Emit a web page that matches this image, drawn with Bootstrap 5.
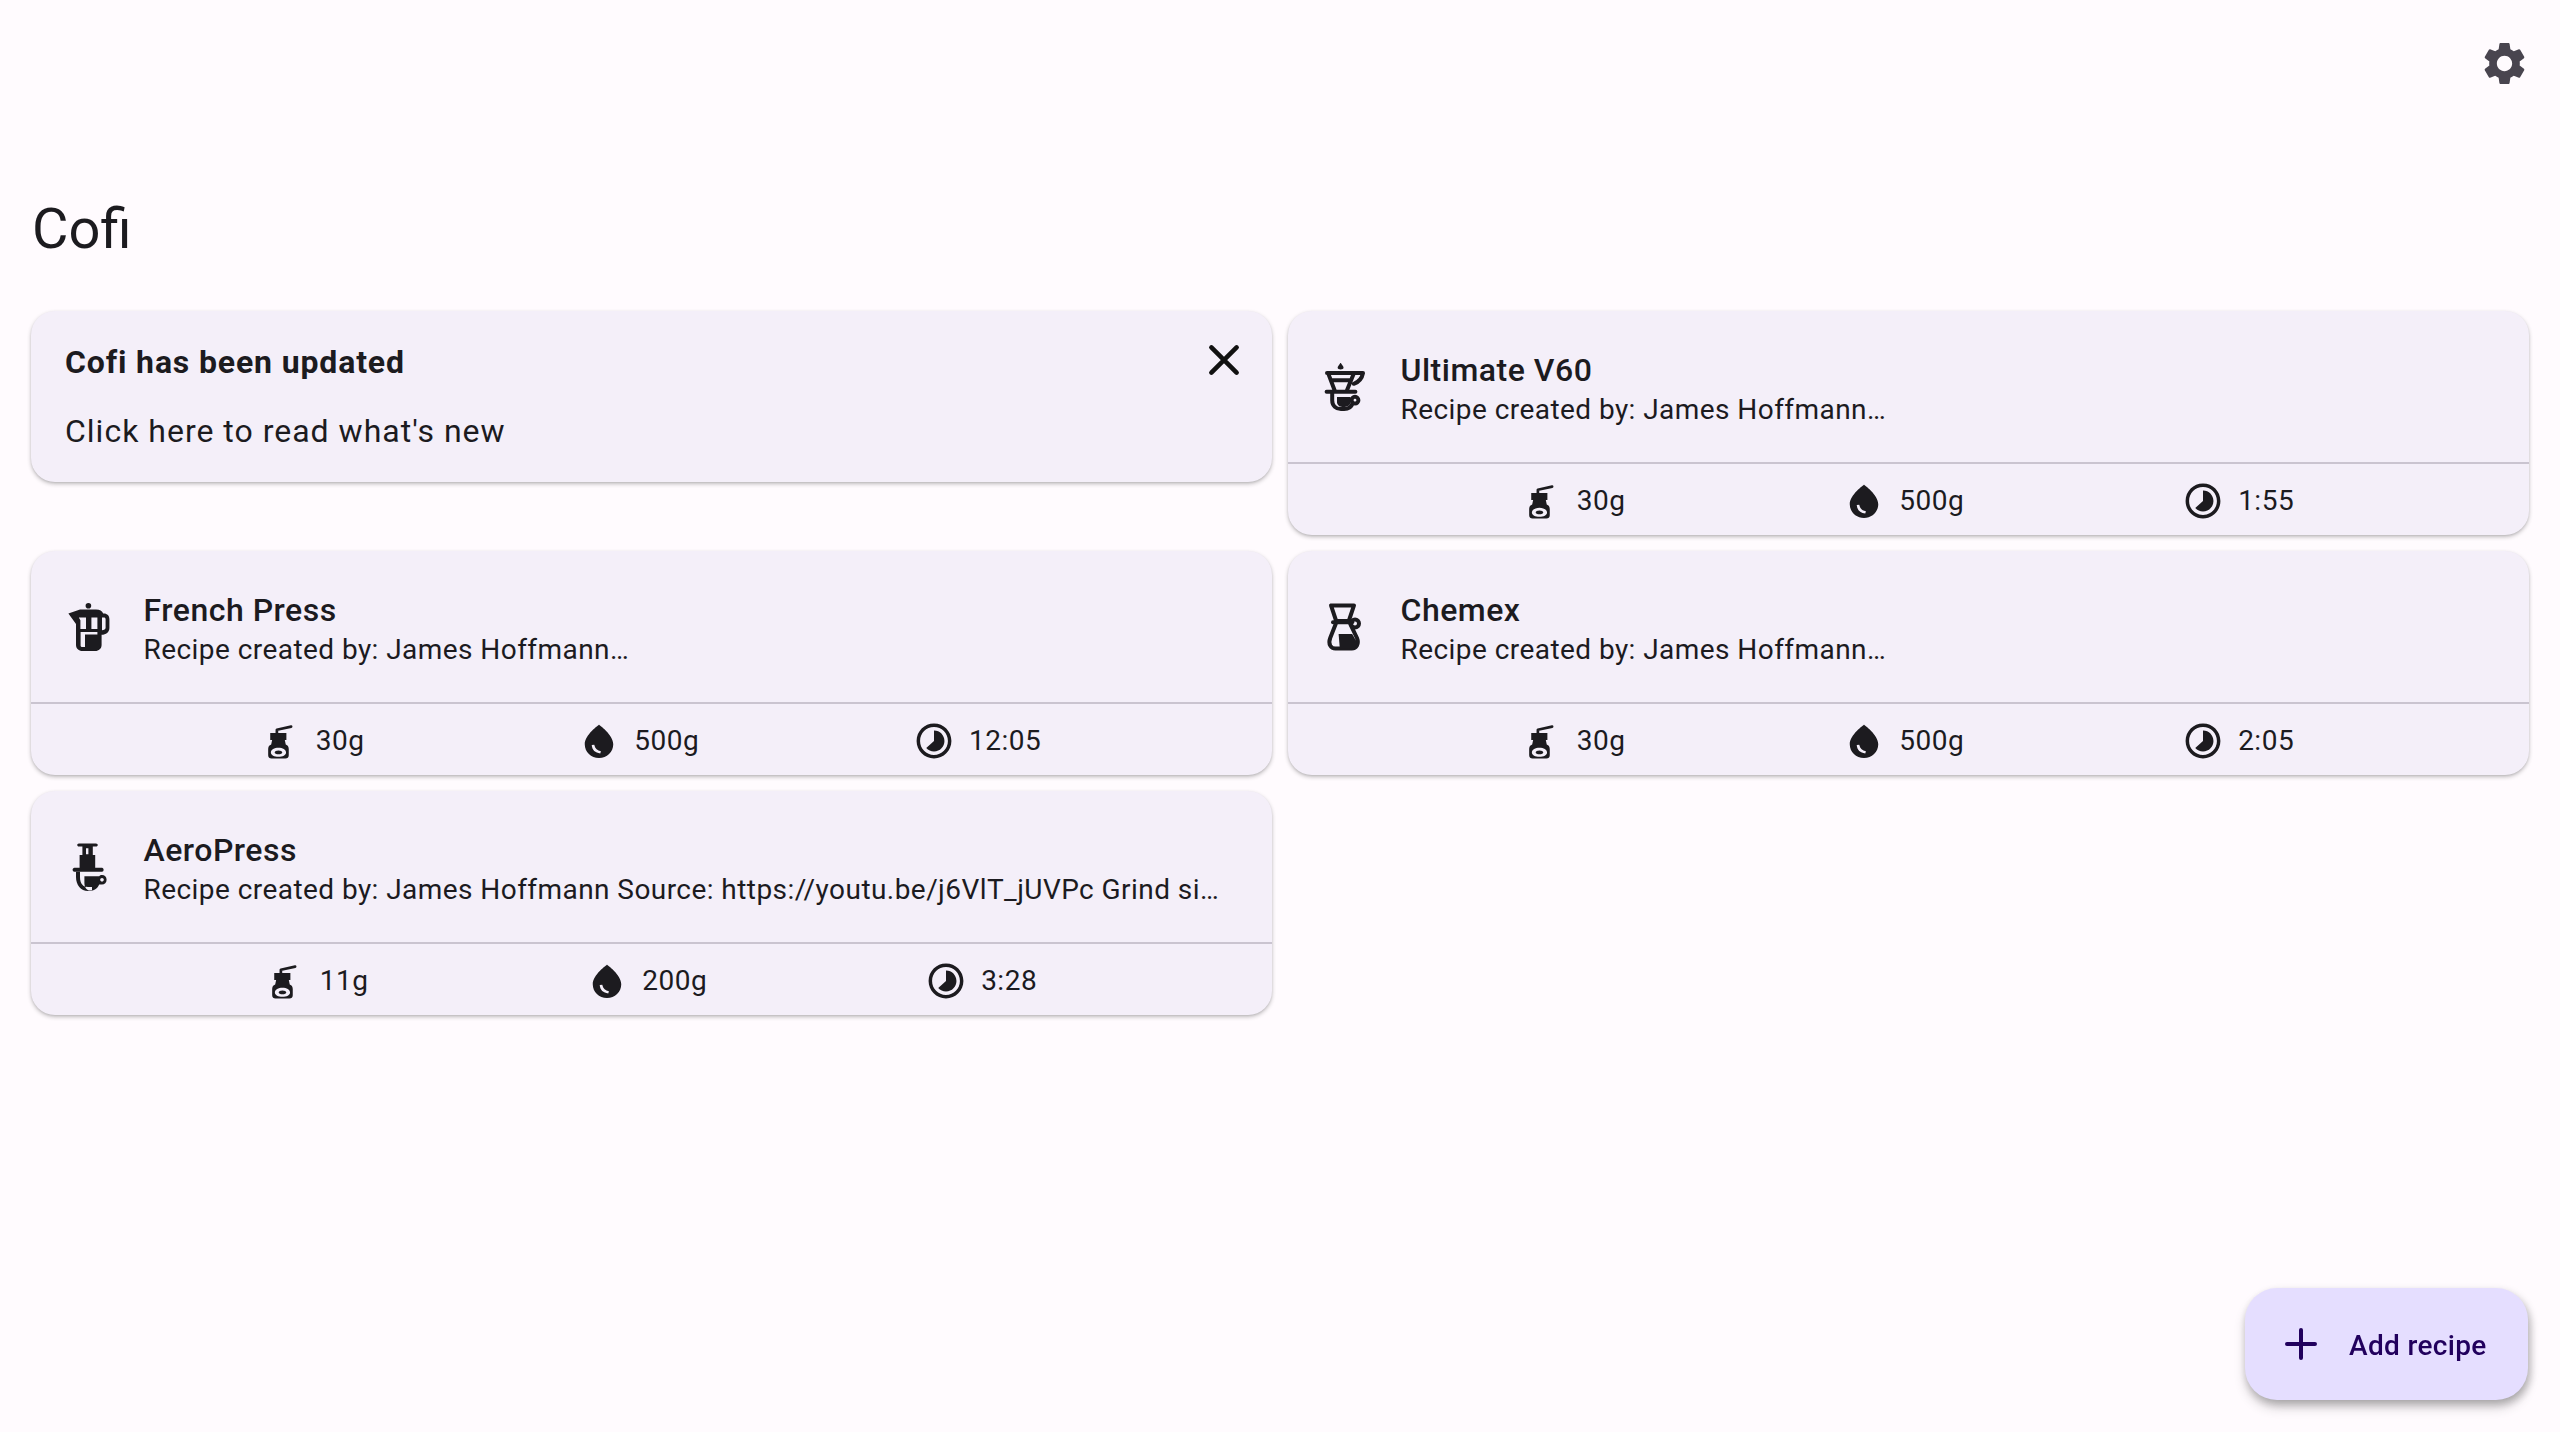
<!DOCTYPE html>
<html lang="en">
<head>
    <meta charset="UTF-8">
    <title>Cofi</title>
    <link href="https://cdn.jsdelivr.net/npm/bootstrap@5.3.3/dist/css/bootstrap.min.css" rel="stylesheet">
    <style>
        body { background: #fffbfe; color: #1c1b1f; font-family: Roboto, "Liberation Sans", sans-serif; height: 1432px; overflow: hidden; }
        .app-bar { height: 128px; padding: 38px 30px 0 0; }
        .gear-ico { width: 51px; height: 51px; fill: #49454f; }
        .page-title { font-size: 56px; font-weight: 400; line-height: 64px; margin: 69px 0 0; padding: 0 32px; height: 114px; }
        .recipe-grid { display: grid; grid-template-columns: 1241px 1241px; gap: 16px; padding: 0 31px; align-items: start; }
        .cofi-card { background: #f4eff9; border: 0; border-radius: 24px; box-shadow: 0 2px 4px rgba(0,0,0,.24), 0 1px 2px rgba(0,0,0,.08); }
        .notice-card { height: 171px; padding: 29px 34px; position: relative; }
        .notice-title { font-size: 32px; font-weight: 700; line-height: 44px; letter-spacing: .85px; margin: 0; }
        .notice-text { font-size: 32px; line-height: 44px; letter-spacing: 1px; margin: 25px 0 0; }
        .close-btn { position: absolute; top: 25px; right: 24px; width: 48px; height: 48px; padding: 0; background: none; border: 0; }
        .close-btn svg { width: 48px; height: 48px; display: block; stroke: #111; stroke-width: 2.3; stroke-linecap: round; fill: none; }
        .recipe-head { height: 151px; padding: 0 33px; display: flex; align-items: center; gap: 31.5px; }
        .recipe-ico { width: 48px; height: 48px; flex: none; color: #1c1b1f; }
        .recipe-text { padding-top: 7px; }
        .recipe-name { font-size: 32px; font-weight: 500; line-height: 40px; letter-spacing: .5px; margin: 0; }
        .recipe-desc { font-size: 28px; line-height: 40px; letter-spacing: .44px; margin: 0; white-space: nowrap; }
        .recipe-stats { height: 73px; border-top: 2px solid #cac4d0; padding: 2px 15px 0; display: flex; align-items: center; justify-content: space-evenly; }
        .stat-item { display: flex; align-items: center; gap: 16px; font-size: 28px; letter-spacing: .5px; }
        .stat-ico { width: 38px; height: 38px; flex: none; }
        .add-fab { position: fixed; right: 32px; bottom: 32px; width: 283px; height: 112px; border: 0; border-radius: 32px; background: #e5deff; color: #21005d; font-size: 28px; font-weight: 500; letter-spacing: .35px; display: flex; align-items: center; padding: 0 0 0 32px; gap: 24px; box-shadow: 0 8px 12px rgba(0,0,0,.16), 2px 4px 8px rgba(0,0,0,.24); }
        .add-fab span { padding-top: 3px; }
        .add-fab svg { width: 48px; height: 48px; flex: none; stroke: #21005d; stroke-width: 2; stroke-linecap: round; fill: none; }
    </style>
</head>
<body>
    <svg width="0" height="0" class="position-absolute">
        <symbol id="ico-grinder" viewBox="0 0 24 24">
            <path fill="none" stroke="currentColor" stroke-width="1.7" stroke-linecap="round" stroke-linejoin="round" d="M9.4 7V4.9L18.4 2.9"/>
            <path fill="currentColor" fill-rule="evenodd" d="M5.2 7H15.4V11.4H14.4L15 14.2C16.2 14.6 16.9 15.6 16.9 17V21C16.9 22.3 16 23.1 14.8 23.1H6C4.8 23.1 3.9 22.3 3.9 21V17C3.9 15.6 4.6 14.6 5.8 14.2L6.4 11.4H5.2ZM10.4 16.2C7.8 16.2 5.6 17.5 5.6 19.2S7.8 22 10.4 22 15.2 20.9 15.2 19.2 13 16.2 10.4 16.2ZM10.4 18C11.7 18 12.8 18.5 12.8 19.2S11.7 20.4 10.4 20.4 8 19.9 8 19.2 9.1 18 10.4 18Z"/>
        </symbol>
        <symbol id="ico-drop" viewBox="0 0 24 24">
            <path fill="currentColor" fill-rule="evenodd" d="M12 1.7C12 1.7 21 8 21 14 21 18.9 17 22.7 12 22.7S3 18.9 3 14C3 8 12 1.7 12 1.7ZM7.4 14.6C7.7 17.8 9.6 19.6 12.8 19.9L13.2 18.4C11 18.2 9.6 17 9 14.4Z"/>
        </symbol>
        <symbol id="ico-clock" viewBox="0 0 24 24">
            <path fill="currentColor" fill-rule="evenodd" d="M12 1C18.1 1 23 5.9 23 12S18.1 23 12 23 1 18.1 1 12 5.9 1 12 1ZM12 3.2C7.1 3.2 3.2 7.1 3.2 12S7.1 20.8 12 20.8 20.8 16.9 20.8 12 16.9 3.2 12 3.2ZM12 5.4C15.8 5.4 18.6 8.4 18.6 12S15.8 18.6 12 18.6C10 18.6 8.4 17.8 7.1 16.4L12 12Z"/>
        </symbol>
        <symbol id="ico-press" viewBox="0 0 24 24">
            <circle fill="currentColor" cx="12.2" cy="1.4" r="1.4"/>
            <path fill="currentColor" fill-rule="evenodd" d="M2.2 5.2 8 3.2H16C18 3.2 19 4 19.6 5.2H20C21.6 5.2 22.7 6.3 22.7 8V12.5C22.7 14.5 21 15.9 18.8 15.9V21C18.8 22.8 17.4 24 15.6 24H9.2C7.4 24 6 22.8 6 21V10.5ZM7.4 7.2 8.2 8.6V13H11V7.2ZM13.7 7.2V13H16.7V7.2ZM8.3 14.5V21.2C8.3 21.7 8.7 22 9.2 22H10.5V15.8H16.7V14.5ZM19 7.2V13.6C20 13.5 20.8 13.2 20.8 12.4V8C20.8 7.5 20.4 7.2 20 7.2Z"/>
        </symbol>
        <symbol id="ico-v60" viewBox="0 0 24 24">
            <path fill="currentColor" d="M9.8 -.2 11.1 1.8C11.6 2.7 10.9 3.2 9.8 3.2S8 2.7 8.5 1.8Z"/>
            <g fill="none" stroke="currentColor" stroke-width="2" stroke-linecap="round" stroke-linejoin="round">
                <path d="M3 5H21C20.5 7.6 19 9.5 16.4 10.4M3.6 5.2 6.8 13.6M16.4 5.2 13 13.6M5 8.6H15"/>
                <path d="M2.8 14.4H17.2M5.6 14.4V18.6C5.6 21.4 7.6 23 10 23H11.6C13.6 23 15.2 22 15.8 20.2"/>
                <circle cx="17" cy="18.6" r="1.7"/>
            </g>
            <path fill="currentColor" d="M8 17H14.8V19.4C14.8 21 13.4 22 11.8 22H10.6C9.2 22 8 21 8 19.4Z"/>
        </symbol>
        <symbol id="ico-chemex" viewBox="0 0 24 24">
            <g fill="none" stroke="currentColor" stroke-width="2" stroke-linecap="round" stroke-linejoin="round">
                <path d="M5 1.2H16.5L13.9 9H7.6Z"/>
                <path d="M6 9.6H15.6"/>
                <circle cx="17" cy="10.2" r="2"/>
                <path d="M7.4 10.4 4.6 17.5C3.4 20.6 5 22.8 7.2 22.8H15.4C17.6 22.8 19.2 20.6 18 17.5L14.6 10.4"/>
            </g>
            <path fill="currentColor" d="M8.8 15.5H15.6L18.2 20 16.8 22.6H9.4Z"/>
        </symbol>
        <symbol id="ico-aero" viewBox="0 0 24 24">
            <path fill="currentColor" fill-rule="evenodd" d="M7.4.2H16C16.5.2 16.9.6 16.9 1S16.5 1.8 16 1.8H14.4V6H15.6V12.4H19C19.5 12.4 19.8 12.9 19.8 13.4S19.5 14.4 19 14.4H5.2C4.7 14.4 4.3 13.9 4.3 13.4S4.7 12.4 5.2 12.4H7.8V6H9.2V1.8H7.4C7 1.8 6.6 1.4 6.6 1S7 .2 7.4.2ZM11 2.6V5.6H12.2V2.6Z"/>
            <path fill="currentColor" fill-rule="evenodd" d="M6 14.4H8V17C8 20.4 9.6 22 12 22H14V24H12C8.4 24 6 21 6 17ZM10.2 16.6H17.6C17.9 16.2 18.4 16 19 16 20.3 16 21.3 17 21.3 18.4S20.3 20.8 19 20.8H17.6C16.8 22.6 15.4 23.8 13.8 23.8H13C11.4 23.8 10.2 22.2 10.2 20ZM19 17.5C18.5 17.5 18.1 17.9 18.1 18.4S18.5 19.3 19 19.3 19.9 18.9 19.9 18.4 19.5 17.5 19 17.5Z"/>
        </symbol>
    </svg>

    <div class="app-bar d-flex justify-content-end">
        <svg class="gear-ico" viewBox="0 0 24 24"><path d="M19.14 12.94c.04-.3.06-.61.06-.94 0-.32-.02-.64-.07-.94l2.03-1.58c.18-.14.23-.41.12-.61l-1.92-3.32c-.12-.22-.37-.29-.59-.22l-2.39.96c-.5-.38-1.03-.7-1.62-.94l-.36-2.54c-.04-.24-.24-.41-.48-.41h-3.84c-.24 0-.43.17-.47.41l-.36 2.54c-.59.24-1.13.57-1.62.94l-2.39-.96c-.22-.08-.47 0-.59.22L2.74 8.87c-.12.21-.08.47.12.61l2.03 1.58c-.05.3-.09.63-.09.94s.02.64.07.94l-2.03 1.58c-.18.14-.23.41-.12.61l1.92 3.32c.12.22.37.29.59.22l2.39-.96c.5.38 1.03.7 1.62.94l.36 2.54c.05.24.24.41.48.41h3.84c.24 0 .44-.17.47-.41l.36-2.54c.59-.24 1.13-.56 1.62-.94l2.39.96c.22.08.47 0 .59-.22l1.92-3.32c.12-.22.07-.47-.12-.61l-2.01-1.58zM12 15.6c-1.98 0-3.6-1.62-3.6-3.6s1.62-3.6 3.6-3.6 3.6 1.62 3.6 3.6-1.62 3.6-3.6 3.6z"/></svg>
    </div>
    <h1 class="page-title">Cofi</h1>

    <div class="recipe-grid">
        <div class="card cofi-card notice-card">
            <p class="notice-title">Cofi has been updated</p>
            <p class="notice-text">Click here to read what's new</p>
            <button type="button" class="close-btn" aria-label="Close"><svg viewBox="0 0 24 24"><path d="M5.7 5.7 18.3 18.3M18.3 5.7 5.7 18.3"/></svg></button>
        </div>

        <div class="card cofi-card">
            <div class="recipe-head">
                <svg class="recipe-ico"><use href="#ico-v60"/></svg>
                <div class="recipe-text">
                    <p class="recipe-name">Ultimate V60</p>
                    <p class="recipe-desc">Recipe created by: James Hoffmann…</p>
                </div>
            </div>
            <div class="recipe-stats">
                <span class="stat-item"><svg class="stat-ico"><use href="#ico-grinder"/></svg>30g</span>
                <span class="stat-item"><svg class="stat-ico"><use href="#ico-drop"/></svg>500g</span>
                <span class="stat-item"><svg class="stat-ico"><use href="#ico-clock"/></svg>1:55</span>
            </div>
        </div>

        <div class="card cofi-card">
            <div class="recipe-head">
                <svg class="recipe-ico"><use href="#ico-press"/></svg>
                <div class="recipe-text">
                    <p class="recipe-name">French Press</p>
                    <p class="recipe-desc">Recipe created by: James Hoffmann…</p>
                </div>
            </div>
            <div class="recipe-stats">
                <span class="stat-item"><svg class="stat-ico"><use href="#ico-grinder"/></svg>30g</span>
                <span class="stat-item"><svg class="stat-ico"><use href="#ico-drop"/></svg>500g</span>
                <span class="stat-item"><svg class="stat-ico"><use href="#ico-clock"/></svg>12:05</span>
            </div>
        </div>

        <div class="card cofi-card">
            <div class="recipe-head">
                <svg class="recipe-ico"><use href="#ico-chemex"/></svg>
                <div class="recipe-text">
                    <p class="recipe-name">Chemex</p>
                    <p class="recipe-desc">Recipe created by: James Hoffmann…</p>
                </div>
            </div>
            <div class="recipe-stats">
                <span class="stat-item"><svg class="stat-ico"><use href="#ico-grinder"/></svg>30g</span>
                <span class="stat-item"><svg class="stat-ico"><use href="#ico-drop"/></svg>500g</span>
                <span class="stat-item"><svg class="stat-ico"><use href="#ico-clock"/></svg>2:05</span>
            </div>
        </div>

        <div class="card cofi-card">
            <div class="recipe-head">
                <svg class="recipe-ico"><use href="#ico-aero"/></svg>
                <div class="recipe-text">
                    <p class="recipe-name">AeroPress</p>
                    <p class="recipe-desc">Recipe created by: James Hoffmann Source: https://youtu.be/j6VlT_jUVPc Grind si…</p>
                </div>
            </div>
            <div class="recipe-stats">
                <span class="stat-item"><svg class="stat-ico"><use href="#ico-grinder"/></svg>11g</span>
                <span class="stat-item"><svg class="stat-ico"><use href="#ico-drop"/></svg>200g</span>
                <span class="stat-item"><svg class="stat-ico"><use href="#ico-clock"/></svg>3:28</span>
            </div>
        </div>
    </div>

    <button type="button" class="add-fab">
        <svg viewBox="0 0 24 24"><path d="M12 5V19M5 12H19"/></svg>
        <span>Add recipe</span>
    </button>

    <script src="https://cdn.jsdelivr.net/npm/bootstrap@5.3.3/dist/js/bootstrap.bundle.min.js"></script>
</body>
</html>
